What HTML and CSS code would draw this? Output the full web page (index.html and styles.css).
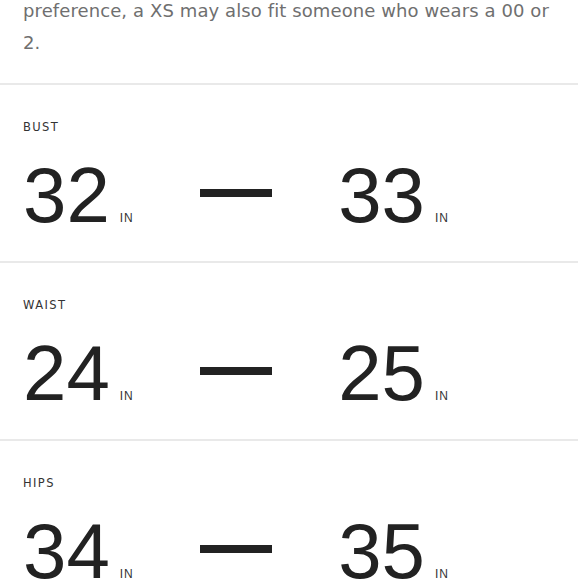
FILE: index.html
```html
<!DOCTYPE html>
<html lang="en">
<head>
<meta charset="utf-8">
<title>Size guide</title>
<link rel="stylesheet" href="styles.css">
</head>
<body>
<div class="page">
  <p class="intro">preference, a XS may also fit someone who wears a 00 or 2.</p>

  <section class="measure">
    <h3 class="label">BUST</h3>
    <div class="row">
      <div class="value"><span class="num">32</span><span class="unit">IN</span></div>
      <div class="dash"></div>
      <div class="value"><span class="num">33</span><span class="unit">IN</span></div>
    </div>
  </section>

  <section class="measure">
    <h3 class="label">WAIST</h3>
    <div class="row">
      <div class="value"><span class="num">24</span><span class="unit">IN</span></div>
      <div class="dash"></div>
      <div class="value"><span class="num">25</span><span class="unit">IN</span></div>
    </div>
  </section>

  <section class="measure">
    <h3 class="label">HIPS</h3>
    <div class="row">
      <div class="value"><span class="num">34</span><span class="unit">IN</span></div>
      <div class="dash"></div>
      <div class="value"><span class="num">35</span><span class="unit">IN</span></div>
    </div>
  </section>
</div>
</body>
</html>
```

FILE: styles.css
```css
html, body {
  margin: 0;
  padding: 0;
  background: #ffffff;
}

.page {
  width: 578px;
  overflow: hidden;
}

.intro {
  margin: -5px 0 0;
  padding: 0 23px 24px;
  font-family: "DejaVu Sans", "Liberation Sans", sans-serif;
  font-size: 18px;
  line-height: 32px;
  letter-spacing: 0.1px;
  color: #6f6f6f;
}

.measure {
  border-top: 2px solid #e9e9e9;
  padding: 34px 23px 27px;
}

.label {
  margin: 0;
  font-family: "DejaVu Sans", "Liberation Sans", sans-serif;
  font-weight: normal;
  font-size: 11.5px;
  line-height: 16px;
  letter-spacing: 1.4px;
  color: #333333;
}

.row {
  margin-top: 21px;
  width: 426px;
  height: 78px;
  display: flex;
  justify-content: space-between;
  align-items: baseline;
}

.value {
  display: flex;
  align-items: baseline;
}

.num {
  font-family: "Liberation Sans", Arial, sans-serif;
  font-size: 78px;
  line-height: 78px;
  color: #222222;
}

.unit {
  margin-left: 10px;
  font-family: "Liberation Sans", Arial, sans-serif;
  font-size: 12px;
  letter-spacing: 1px;
  color: #333333;
}

.dash {
  align-self: center;
  width: 72px;
  height: 8px;
  margin-bottom: 4px;
  background: #222222;
}
```
